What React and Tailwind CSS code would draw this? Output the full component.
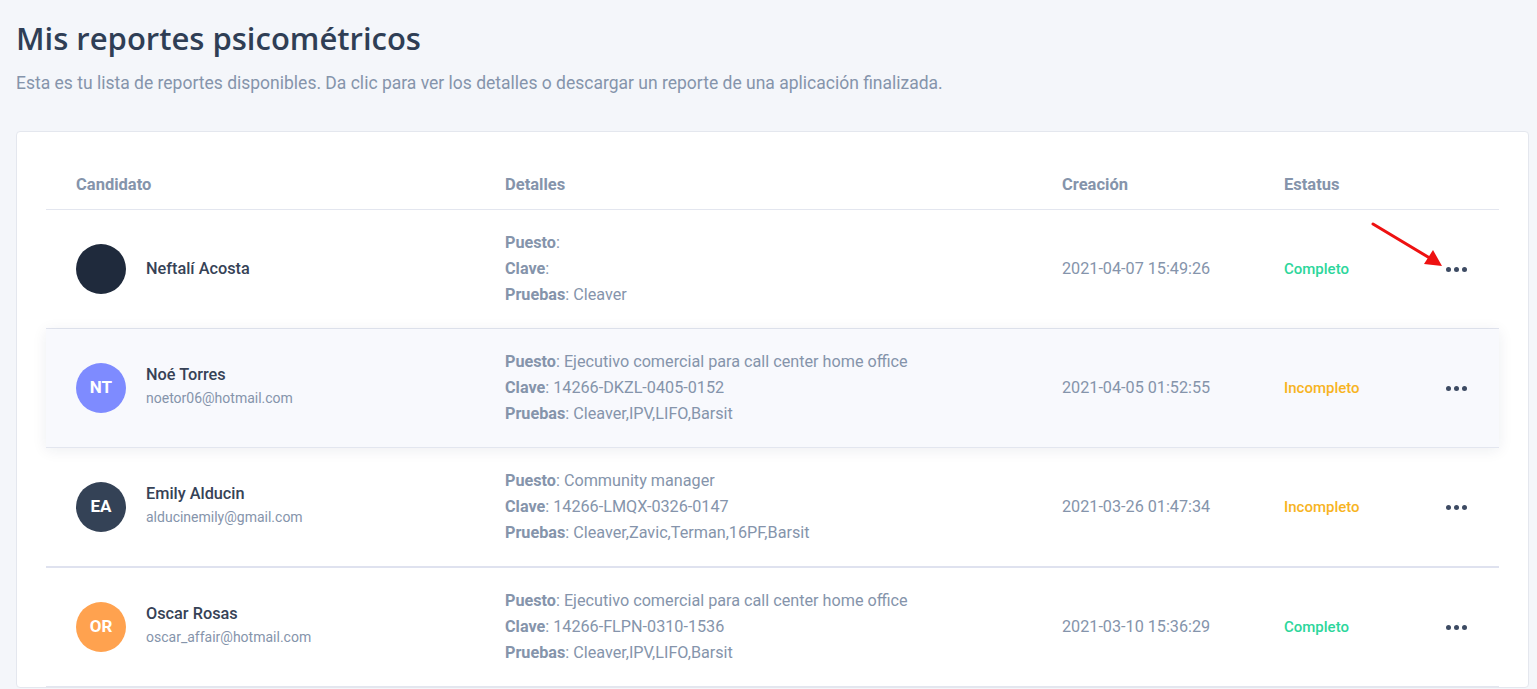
import React from 'react';

const ROWS = [
  {
    name: 'Neftalí Acosta',
    email: '',
    initials: '',
    avatar: 'bg-[#1f2a3c]',
    puesto: '',
    clave: '',
    pruebas: 'Cleaver',
    date: '2021-04-07 15:49:26',
    status: 'Completo',
  },
  {
    name: 'Noé Torres',
    email: 'noetor06@hotmail.com',
    initials: 'NT',
    avatar: 'bg-[#7e8bff]',
    puesto: 'Ejecutivo comercial para call center home office',
    clave: '14266-DKZL-0405-0152',
    pruebas: 'Cleaver,IPV,LIFO,Barsit',
    date: '2021-04-05 01:52:55',
    status: 'Incompleto',
    hover: true,
  },
  {
    name: 'Emily Alducin',
    email: 'alducinemily@gmail.com',
    initials: 'EA',
    avatar: 'bg-[#344256]',
    puesto: 'Community manager',
    clave: '14266-LMQX-0326-0147',
    pruebas: 'Cleaver,Zavic,Terman,16PF,Barsit',
    date: '2021-03-26 01:47:34',
    status: 'Incompleto',
    thick: true,
  },
  {
    name: 'Oscar Rosas',
    email: 'oscar_affair@hotmail.com',
    initials: 'OR',
    avatar: 'bg-[#ffa24f]',
    puesto: 'Ejecutivo comercial para call center home office',
    clave: '14266-FLPN-0310-1536',
    pruebas: 'Cleaver,IPV,LIFO,Barsit',
    date: '2021-03-10 15:36:29',
    status: 'Completo',
  },
];

const COLS = 'grid grid-cols-[429px_557px_222px_162px_83px]';

function Dots() {
  return (
    <div className="flex items-center gap-[3px]">
      <span className="w-[5px] h-[5px] rounded-full bg-[#3d4b63]" />
      <span className="w-[5px] h-[5px] rounded-full bg-[#3d4b63]" />
      <span className="w-[5px] h-[5px] rounded-full bg-[#3d4b63]" />
    </div>
  );
}

function Row({ r, first }) {
  return (
    <div
      className={`${COLS} relative items-center ${
        r.hover ? 'bg-[#f8f9fd] shadow-[0_2px_14px_rgba(30,40,80,0.08)] z-10' : ''
      } ${r.thick ? 'h-[120px] border-b-2 border-[#dfe2ef]' : 'h-[119px] border-b border-[#e3e6ef]'}`}
    >
      <div className="pl-[30px] flex items-center">
        <div
          className={`w-[50px] h-[50px] rounded-full ${r.avatar} flex items-center justify-center text-white text-[17px] font-bold`}
        >
          {r.initials}
        </div>
        <div className={`ml-[20px] ${r.email ? 'mb-[4px]' : ''}`}>
          <div className="text-[16.3px] font-medium text-[#364256] leading-[22px]">{r.name}</div>
          {r.email && (
            <div className="text-[14px] text-[#8594ab] leading-[20px] mt-[2px]">{r.email}</div>
          )}
        </div>
      </div>
      <div className="pl-[30px] text-[16.2px] leading-[26px] text-[#8594ab]">
        <div>
          <span className="font-bold">Puesto</span>:{r.puesto ? ' ' + r.puesto : ''}
        </div>
        <div>
          <span className="font-bold">Clave</span>:{r.clave ? ' ' + r.clave : ''}
        </div>
        <div>
          <span className="font-bold">Pruebas</span>: {r.pruebas}
        </div>
      </div>
      <div className="pl-[30px] text-[16.2px] text-[#8594ab]">{r.date}</div>
      <div
        className={`pl-[30px] text-[15px] font-medium ${
          r.status === 'Completo' ? 'text-[#2cd69b]' : 'text-[#f7b41f]'
        }`}
      >
        {r.status}
      </div>
      <div className="pl-[30px] flex items-center">
        <Dots />
      </div>
      {first && (
        <svg
          className="absolute left-[1325px] top-[12px]"
          width="80"
          height="50"
          viewBox="0 0 80 50"
        >
          <line x1="2" y1="2" x2="62" y2="38" stroke="#ee1111" strokeWidth="3" strokeLinecap="round" />
          <polygon points="71,44 53,42 62,28" fill="#ee1111" />
        </svg>
      )}
    </div>
  );
}

export default function App() {
  return (
    <div
      className="min-h-[689px] bg-[#f4f6fa] px-[16px] pb-10"
      style={{ fontFamily: 'Roboto, "Liberation Sans", sans-serif' }}
    >
      <h1
        className="pt-[18px] text-[31px] leading-[40px] font-semibold text-[#2f3e55]"
        style={{ fontFamily: '"Open Sans", Lato, sans-serif' }}
      >
        Mis reportes psicométricos
      </h1>
      <p className="mt-[13px] text-[17.5px] leading-[24px] text-[#8594ab]">
        Esta es tu lista de reportes disponibles. Da clic para ver los detalles o descargar un reporte de una aplicación finalizada.
      </p>
      <div className="mt-[36px] w-[1513px] bg-white border border-[#e4e7ee] rounded-[4px] px-[29px] pt-[29px]">
        <div className={`${COLS} h-[49px] items-center border-b border-[#e3e6ef] text-[16.5px] font-bold text-[#8594ab]`}>
          <div className="pl-[30px]">Candidato</div>
          <div className="pl-[30px]">Detalles</div>
          <div className="pl-[30px]">Creación</div>
          <div className="pl-[30px]">Estatus</div>
          <div />
        </div>
        {ROWS.map((r, i) => (
          <Row key={r.name} r={r} first={i === 0} />
        ))}
      </div>
    </div>
  );
}
